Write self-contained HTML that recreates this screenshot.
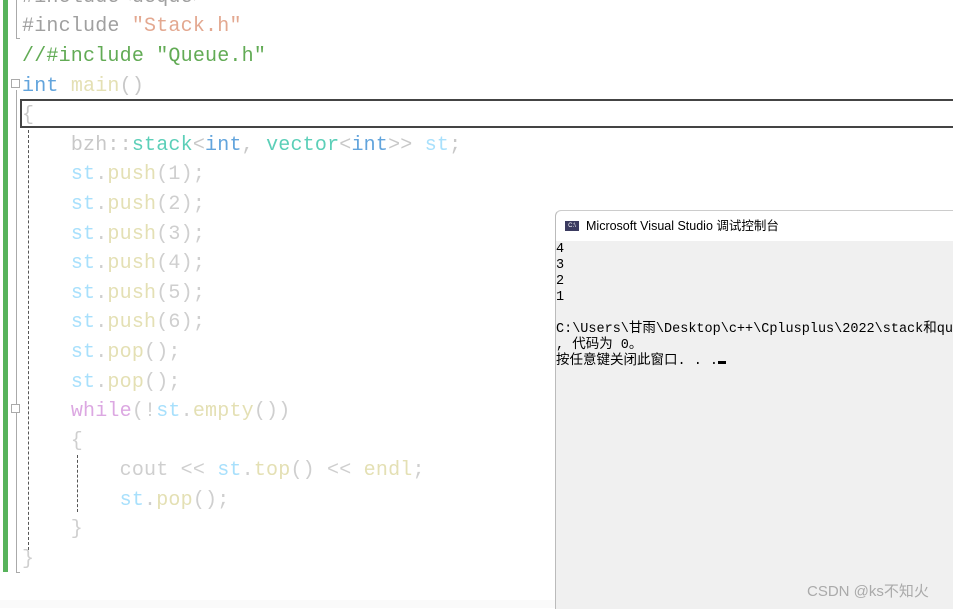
<!DOCTYPE html>
<html><head><meta charset="utf-8"><style>
body{margin:0;width:953px;height:608px;background:#fff;position:relative;overflow:hidden;font-family:"Liberation Mono","Noto Sans CJK SC",monospace}
.l{position:absolute;left:22px;font-size:20px;line-height:30px;white-space:pre;color:#cfcfcf;letter-spacing:0.2px}
.gray{color:#a0a0a0}.str{color:#e3a890}.com{color:#62ab55}.kw{color:#62a4dc}.fn{color:#e4e0b4}.ty{color:#5ccfb8}.var{color:#a8e0fc}.ctl{color:#dca8e2}.p{color:#c8c8c8}
.con{position:absolute;left:555px;top:210px;width:398px;height:398px;background:#f0f0f0;border-left:1px solid #bbb;border-top:1px solid #ccc;border-radius:6px 0 0 0}
.tb{height:30px;background:#fff;border-radius:6px 0 0 0;font-family:"Liberation Sans","Noto Sans CJK SC",sans-serif;font-size:12.5px;line-height:30px;padding-left:30px;position:relative;color:#000}
.ic{position:absolute;left:9px;top:10px;width:14px;height:10px;background:#3b3b60;color:#fff;font-size:6px;line-height:10px;text-align:center}
.ct{font-family:"Liberation Mono","Noto Sans CJK SC",monospace;font-size:13.5px;line-height:16px;white-space:pre;color:#000;padding-top:1px}
</style></head><body>
<div style="position:absolute;left:3px;top:0;width:5px;height:572px;background:#57b35b"></div>
<div style="position:absolute;left:16px;top:0;width:1px;height:38px;background:#aaa"></div>
<div style="position:absolute;left:16px;top:38px;width:4px;height:1px;background:#aaa"></div>
<div style="position:absolute;left:16px;top:90px;width:1px;height:482px;background:#aaa"></div>
<div style="position:absolute;left:16px;top:572px;width:4px;height:1px;background:#aaa"></div>
<div style="position:absolute;left:11px;top:79px;width:9px;height:9px;border:1px solid #aaa;background:#fff;box-sizing:border-box"></div>
<div style="position:absolute;left:11px;top:404px;width:9px;height:9px;border:1px solid #aaa;background:#fff;box-sizing:border-box"></div>
<div style="position:absolute;left:28px;top:130px;height:420px;border-left:1px dashed #555"></div>
<div style="position:absolute;left:77px;top:455px;height:57px;border-left:1px dashed #555"></div>
<div style="position:absolute;left:20px;top:99px;width:940px;height:29px;border:2px solid #444;box-sizing:border-box"></div>
<div class="l gray" style="top:-17px">#include&lt;deque&gt;</div>
<div class="l" style="top:12px"><span class="gray">#include </span><span class="str">"Stack.h"</span></div>
<div class="l com" style="top:42px">//#include "Queue.h"</div>
<div class="l" style="top:72px"><span class="kw">int</span> <span class="fn">main</span><span class="p">()</span></div>
<div class="l p" style="top:101px">{</div>
<div class="l" style="top:131px">    <span class="p">bzh::</span><span class="ty">stack</span><span class="p">&lt;</span><span class="kw">int</span><span class="p">, </span><span class="ty">vector</span><span class="p">&lt;</span><span class="kw">int</span><span class="p">&gt;&gt; </span><span class="var">st</span><span class="p">;</span></div>
<div class="l" style="top:160px">    <span class="var">st</span>.<span class="fn">push</span>(1);</div>
<div class="l" style="top:190px">    <span class="var">st</span>.<span class="fn">push</span>(2);</div>
<div class="l" style="top:220px">    <span class="var">st</span>.<span class="fn">push</span>(3);</div>
<div class="l" style="top:249px">    <span class="var">st</span>.<span class="fn">push</span>(4);</div>
<div class="l" style="top:279px">    <span class="var">st</span>.<span class="fn">push</span>(5);</div>
<div class="l" style="top:308px">    <span class="var">st</span>.<span class="fn">push</span>(6);</div>
<div class="l" style="top:338px">    <span class="var">st</span>.<span class="fn">pop</span>();</div>
<div class="l" style="top:368px">    <span class="var">st</span>.<span class="fn">pop</span>();</div>
<div class="l" style="top:397px">    <span class="ctl">while</span>(!<span class="var">st</span>.<span class="fn">empty</span>())</div>
<div class="l" style="top:427px">    {</div>
<div class="l" style="top:456px">        cout &lt;&lt; <span class="var">st</span>.<span class="fn">top</span>() &lt;&lt; <span class="fn">endl</span>;</div>
<div class="l" style="top:486px">        <span class="var">st</span>.<span class="fn">pop</span>();</div>
<div class="l" style="top:515px">    }</div>
<div class="l" style="top:545px">}</div>
<div style="position:absolute;left:0;top:600px;width:953px;height:8px;background:#fafafa"></div>
<div class="con">
<div class="tb"><div class="ic">C:\</div>Microsoft Visual Studio 调试控制台</div>
<div class="ct">4
3
2
1

C:\Users\甘雨\Desktop\c++\Cplusplus\2022\stack和queue
, 代码为 0。
按任意键关闭此窗口. . .<span style="display:inline-block;width:8px;height:3px;background:#000"></span></div>
</div>
<div style="position:absolute;left:807px;top:580px;font-family:'Liberation Sans','Noto Sans CJK SC',sans-serif;font-size:15px;color:#aaa">CSDN @ks不知火</div>
</body></html>
